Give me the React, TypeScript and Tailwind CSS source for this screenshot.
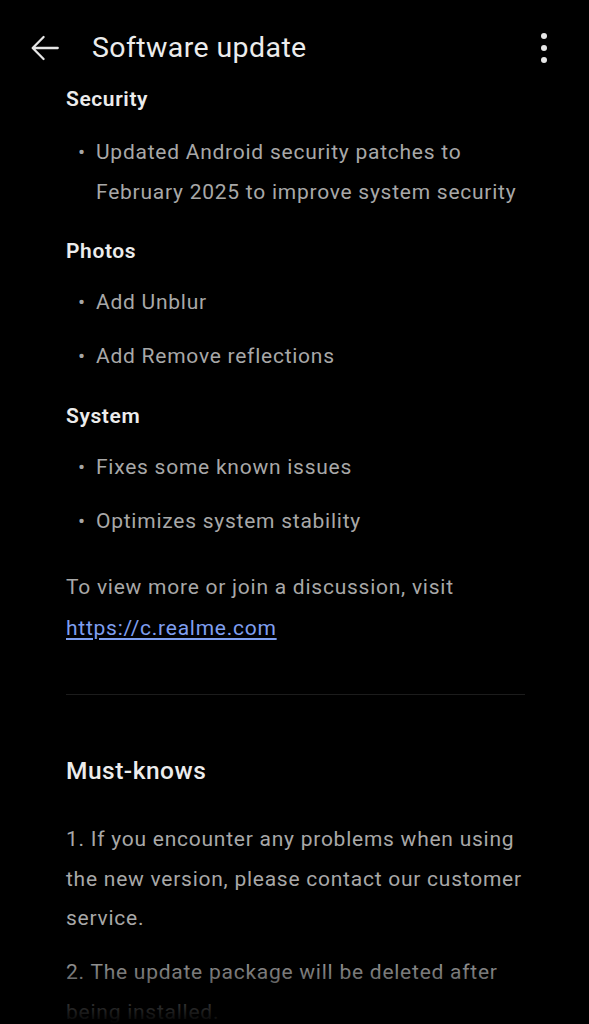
import React from "react";

const Bullet = ({ children }: { children: React.ReactNode }) => (
  <div className="flex">
    <span className="w-[30px] shrink-0 pl-[12px] text-[#a6a6a6]">•</span>
    <span>{children}</span>
  </div>
);

export default function App() {
  return (
    <div
      className="relative w-[589px] h-[1024px] overflow-hidden bg-black"
      style={{ fontFamily: "Roboto, 'Noto Sans', sans-serif" }}
    >
      <div className="flex items-center h-[96px] px-[28px]">
        <svg width="34" height="34" viewBox="0 0 24 24">
          <path d="M21 12H3.5M11 4.2L3.3 12l7.7 7.8" fill="none" stroke="#e6e6e6" strokeWidth="1.6" strokeLinecap="round" strokeLinejoin="round" />
        </svg>
        <div className="ml-[30px] text-[28.5px] text-[#ececec] font-normal tracking-[0.4px]">Software update</div>
        <div className="ml-auto flex flex-col gap-[6px] pr-[14px] -mt-[1px]">
          <span className="block w-[6px] h-[6px] rounded-full bg-[#e6e6e6]" />
          <span className="block w-[6px] h-[6px] rounded-full bg-[#e6e6e6]" />
          <span className="block w-[6px] h-[6px] rounded-full bg-[#e6e6e6]" />
        </div>
      </div>

      <div className="px-[66px] -mt-[12px] text-[21px] tracking-[0.75px] text-[#a8a8a8] leading-[39.5px]">
        <div className="text-[21px] tracking-[0.6px] font-semibold text-[#ececec] leading-[30px]">Security</div>
        <div className="mt-[19px] flex flex-col gap-[14px]">
          <Bullet>Updated Android security patches to February 2025 to improve system security</Bullet>
        </div>
        <div className="mt-[24px] text-[21px] tracking-[0.6px] font-semibold text-[#ececec] leading-[30px]">Photos</div>
        <div className="mt-[17px] flex flex-col gap-[14px]">
          <Bullet>Add Unblur</Bullet>
          <Bullet>Add Remove reflections</Bullet>
        </div>
        <div className="mt-[25px] text-[21px] tracking-[0.6px] font-semibold text-[#ececec] leading-[30px]">System</div>
        <div className="mt-[17px] flex flex-col gap-[14px]">
          <Bullet>Fixes some known issues</Bullet>
          <Bullet>Optimizes system stability</Bullet>
        </div>
        <div className="mt-[26px] leading-[41px]">
          To view more or join a discussion, visit
          <br />
          <a className="text-[#7f9ff0] underline underline-offset-[3px]">https://c.realme.com</a>
        </div>
        <div className="mt-[45px] h-px bg-[#1c1c1c] -mr-[2px]" />
        <div className="mt-[60px] text-[24.5px] tracking-[0.5px] font-medium text-[#ececec] leading-[32px]">Must-knows</div>
        <div className="mt-[33px]">
          1. If you encounter any problems when using the new version, please contact our customer service.
        </div>
        <div className="mt-[13px] leading-[40px]">2. The update package will be deleted after being installed.</div>
      </div>

      <div className="absolute left-0 right-0 bottom-0 h-[70px] bg-gradient-to-b from-transparent to-black" />
    </div>
  );
}
